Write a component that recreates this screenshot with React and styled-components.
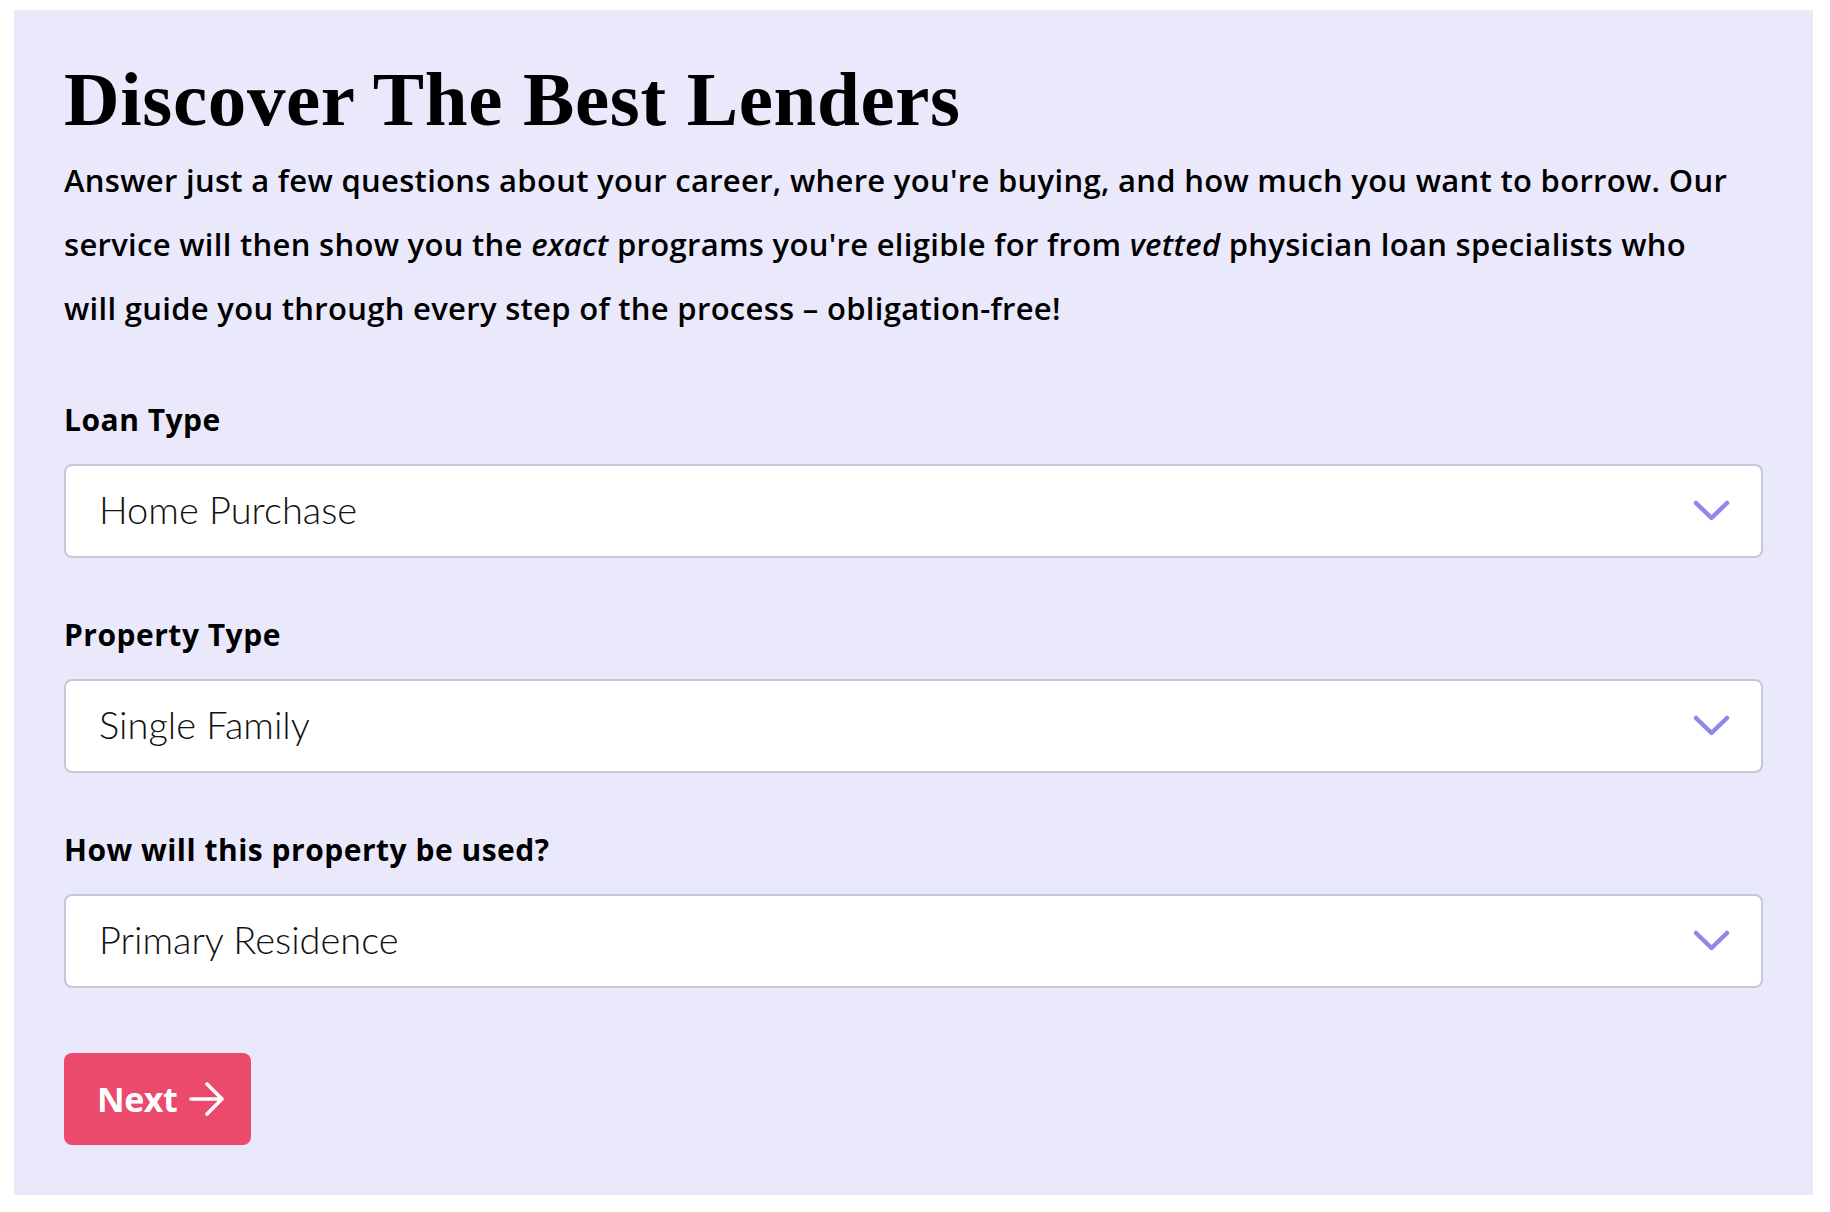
import React from "react";
import styled, { createGlobalStyle } from "styled-components";

const GlobalStyle = createGlobalStyle`
  html, body { margin: 0; padding: 0; background: #ffffff; }
  body { font-family: "Open Sans", "Noto Sans", sans-serif; color: #000; }
  * { box-sizing: border-box; }
`;

const Page = styled.div`
  padding: 10px 17px 16px 14px;
`;

const Panel = styled.section`
  background: #eae9fc;
  padding: 43px 50px 50px;
  display: flex;
  flex-direction: column;
`;

const Title = styled.h1`
  margin: 0;
  font-family: "Liberation Serif", "Times New Roman", serif;
  font-weight: 700;
  font-size: 77px;
  line-height: 92px;
  letter-spacing: 0.65px;
  color: #000;
`;

const Intro = styled.p`
  margin: 3px 0 0;
  font-family: "Open Sans", sans-serif;
  font-weight: 600;
  font-size: 31px;
  line-height: 64px;
  letter-spacing: 0.3px;
  color: #000;
  em { font-style: italic; }
`;

const Form = styled.form`
  display: flex;
  flex-direction: column;
  gap: 59px;
  margin-top: 62px;
`;

const Field = styled.div`
  display: flex;
  flex-direction: column;
  gap: 26px;
`;

const Label = styled.label`
  font-family: "Open Sans", sans-serif;
  font-weight: 700;
  font-size: 30px;
  line-height: 36px;
  letter-spacing: 0.5px;
  color: #000;
`;

const Select = styled.div`
  height: 94px;
  background: #fff;
  border: 2px solid #c3c8d9;
  border-radius: 8px;
  padding: 0 31px 0 33px;
  display: flex;
  align-items: center;
  justify-content: space-between;
`;

const Value = styled.span`
  font-family: Lato, sans-serif;
  font-weight: 300;
  font-size: 38px;
  line-height: 1;
  color: #111;
  margin-top: -4px;
`;

const Actions = styled.div`
  margin-top: 65px;
  display: flex;
`;

const NextButton = styled.button`
  height: 92px;
  width: 187px;
  border: none;
  border-radius: 8px;
  background: #ec4a6c;
  color: #fff;
  font-family: "Open Sans", sans-serif;
  font-weight: 700;
  font-size: 34px;
  letter-spacing: -0.5px;
  display: flex;
  align-items: center;
  gap: 12px;
  padding: 0 0 0 33px;
  cursor: pointer;
`;

const Chevron = () => (
  <svg width="37" height="22" viewBox="0 0 37 22" fill="none">
    <path d="M3 3 L18.5 18 L34 3" stroke="#8f88e8" strokeWidth="4.5" strokeLinecap="round" strokeLinejoin="round" />
  </svg>
);

const Arrow = () => (
  <svg width="36" height="34" viewBox="0 0 36 34" fill="none">
    <path d="M2 17 H33 M18 2 L33 17 L18 32" stroke="#fff" strokeWidth="3.6" strokeLinecap="round" strokeLinejoin="round" />
  </svg>
);

const fields = [
  { label: "Loan Type", value: "Home Purchase" },
  { label: "Property Type", value: "Single Family" },
  { label: "How will this property be used?", value: "Primary Residence" },
];

export default function App() {
  return (
    <>
      <GlobalStyle />
      <Page>
        <Panel>
          <Title>Discover The Best Lenders</Title>
          <Intro>
            Answer just a few questions about your career, where you're buying, and how much you want to borrow. Our
            <br />
            service will then show you the <em>exact</em> programs you're eligible for from <em>vetted</em> physician
            loan specialists who
            <br />
            will guide you through every step of the process – obligation-free!
          </Intro>
          <Form onSubmit={(e) => e.preventDefault()}>
            {fields.map((f) => (
              <Field key={f.label}>
                <Label>{f.label}</Label>
                <Select role="button">
                  <Value>{f.value}</Value>
                  <Chevron />
                </Select>
              </Field>
            ))}
          </Form>
          <Actions>
            <NextButton type="button">
              Next <Arrow />
            </NextButton>
          </Actions>
        </Panel>
      </Page>
    </>
  );
}
